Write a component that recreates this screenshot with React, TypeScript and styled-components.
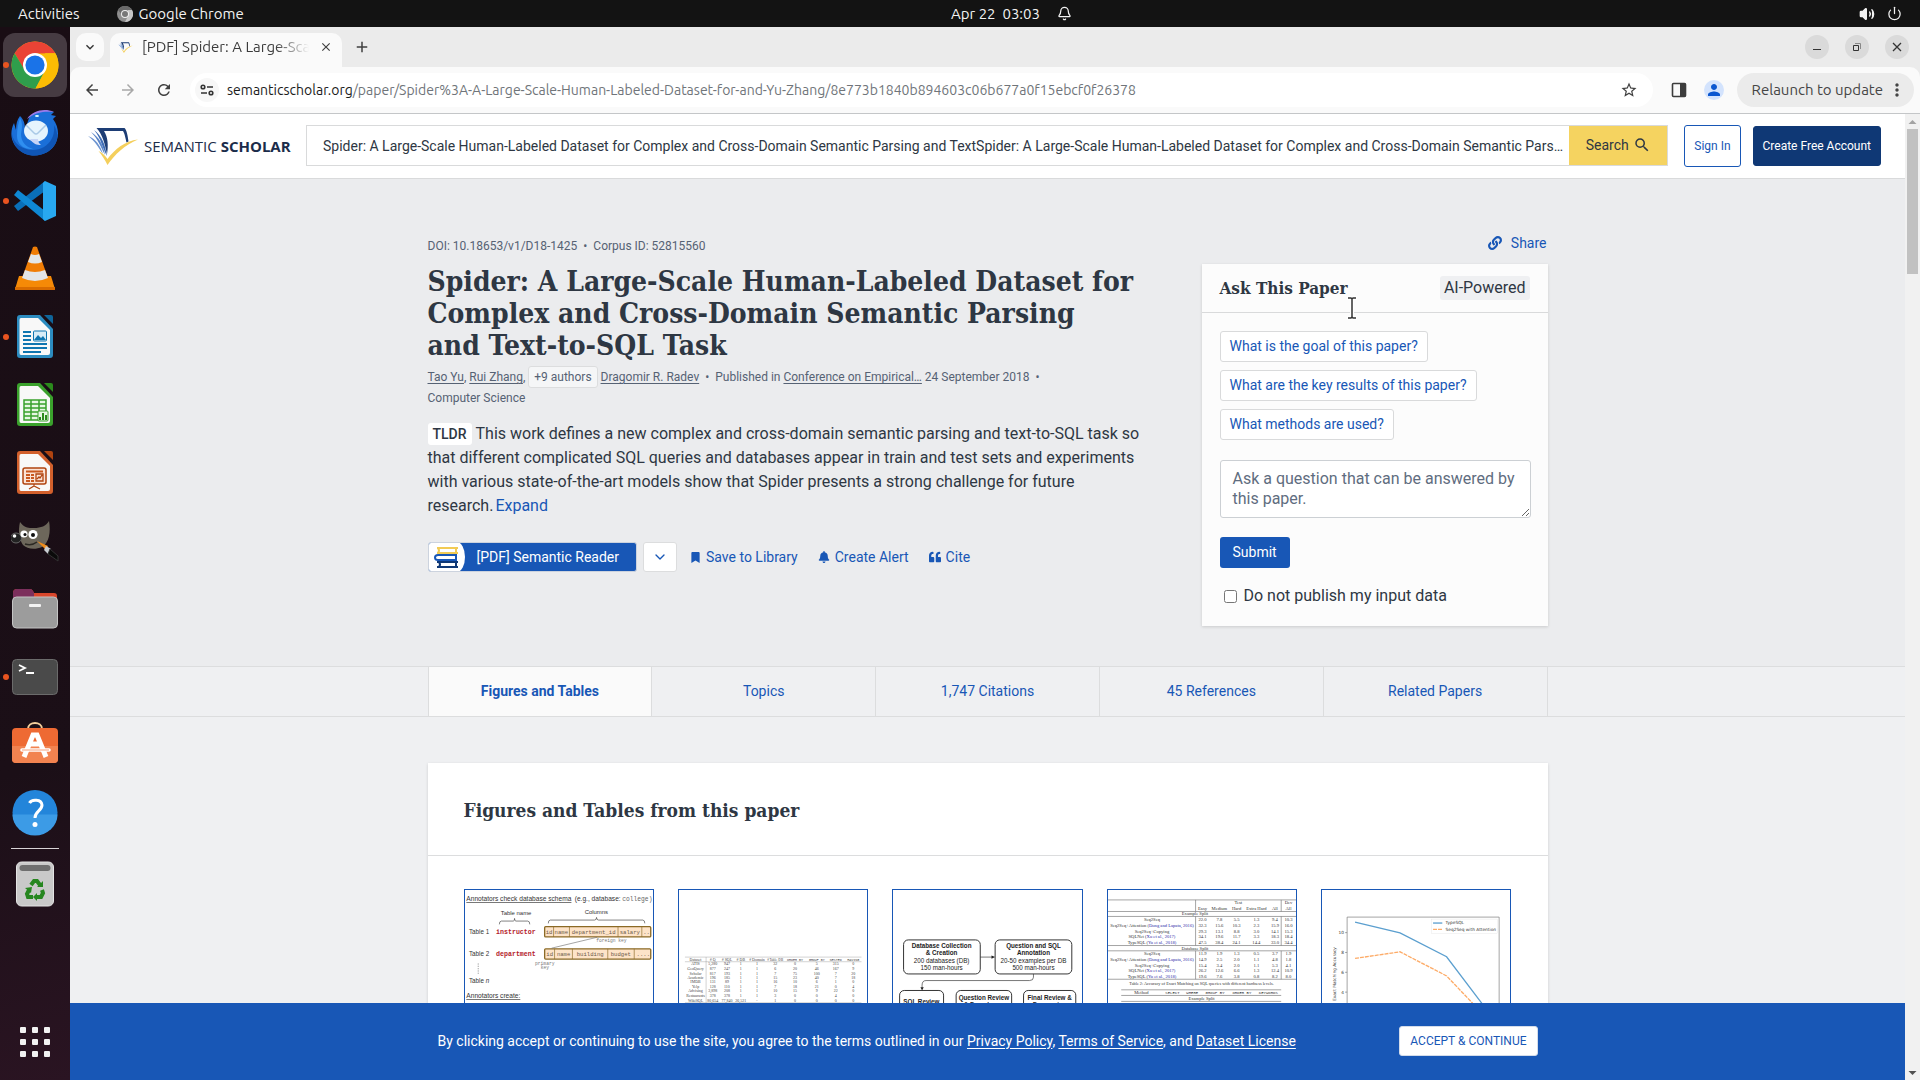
import React from "react";
import styled, { createGlobalStyle, css } from "styled-components";
import {
  MdAdd,
  MdArrowBack,
  MdArrowForward,
  MdClose,
  MdKeyboardArrowDown,
  MdMoreVert,
  MdPerson,
  MdRefresh,
  MdSearch,
  MdStarOutline,
} from "react-icons/md";
import { FaBell, FaBookmark, FaLink, FaQuoteLeft } from "react-icons/fa";
import { Bell, ChevronDown, Power, Volume2 } from "lucide-react";

const sans = `Roboto, "Liberation Sans", sans-serif`;
const slab = `"Roboto Slab", "DejaVu Serif Condensed", "DejaVu Serif", serif`;
const system = `Ubuntu, "Open Sans", "Noto Sans", sans-serif`;
const blue = "#1857b6";
const ink = "#2e3743";
const rule = "#d9dadb";

const Global = createGlobalStyle`
  *, *::before, *::after { box-sizing: border-box; }
  body { margin: 0; font-family: ${sans}; color: ${ink}; }
  button, input, textarea { font: inherit; color: inherit; margin: 0; }
  button { cursor: pointer; }
  h1, h2, p, ul { margin: 0; padding: 0; }
  svg { display: block; flex: none; }
`;

/* ---------- Desktop ---------- */

const Desktop = styled.div`
  display: flex;
  flex-direction: column;
  height: 100vh;
  overflow: hidden;
`;

const TopBar = styled.header`
  display: grid;
  grid-template-columns: 50% auto 1fr;
  align-items: center;
  height: 27px;
  flex: none;
  padding: 0 18px 0 0;
  background: #131313;
  color: #f2f2f2;
  font: 15px/20px ${system};
`;

const TopGroup = styled.div<{ $end?: boolean; $gap: number }>`
  display: flex;
  align-items: center;
  gap: ${(p) => p.$gap}px;
  justify-content: ${(p) => (p.$end ? "flex-end" : "flex-start")};
  white-space: pre;
`;

const Activities = styled.span`
  padding-left: 18px;
`;

const AppName = styled.span`
  display: flex;
  align-items: center;
  gap: 6px;
`;

const Work = styled.div`
  display: flex;
  flex: 1;
  min-height: 0;
`;

const Dock = styled.nav`
  display: flex;
  flex-direction: column;
  align-items: center;
  gap: 4px;
  width: 70px;
  flex: none;
  padding: 6px 0 6px;
  background: linear-gradient(165deg, #190d14 0%, #1b0f17 70%, #2a1422 100%);
`;

const DockButton = styled.button<{ $active?: boolean; $running?: boolean }>`
  position: relative;
  display: grid;
  place-items: center;
  width: 64px;
  height: 64px;
  flex: none;
  padding: 0;
  border: 0;
  border-radius: 12px;
  background: ${(p) => (p.$active ? "#463b42" : "transparent")};
  ${(p) =>
    p.$running &&
    css`
      &::before {
        content: "";
        position: absolute;
        left: 0;
        top: 29px;
        width: 6px;
        height: 6px;
        border-radius: 50%;
        background: #e95420;
      }
    `}
`;

const DockRule = styled.hr`
  width: 48px;
  height: 1px;
  flex: none;
  margin: -1px 0 -1px;
  border: 0;
  background: #d8d4d6;
`;

const DockSpring = styled.div`
  flex: 1;
`;

/* ---------- Browser ---------- */

const Browser = styled.div`
  display: flex;
  flex-direction: column;
  flex: 1;
  min-width: 0;
  background: #ebebeb;
  font: 14px/20px ${system};
`;

const TabStrip = styled.div`
  display: flex;
  height: 40px;
  flex: none;
  padding: 6px 11px 0 6px;
`;

const TabSearch = styled.button`
  display: grid;
  place-items: center;
  width: 28px;
  height: 28px;
  margin-right: 6px;
  padding: 0;
  border: 0;
  border-radius: 10px;
  background: #fafafa;
  color: #333;
`;

const Tab = styled.div`
  display: flex;
  align-items: center;
  width: 232px;
  padding: 0 9px 6px 8px;
  border-radius: 10px 10px 0 0;
  background: #fafafa;
  color: #3c3c3c;
  font-size: 15px;
`;

const TabTitle = styled.span`
  flex: 1;
  min-width: 0;
  margin: 0 10px 0 9px;
  overflow: hidden;
  white-space: nowrap;
  mask-image: linear-gradient(90deg, #000 80%, transparent 100%);
`;

const Bare = styled.button`
  display: grid;
  place-items: center;
  padding: 0;
  border: 0;
  background: none;
  color: #404040;
`;

const NewTab = styled(Bare)`
  width: 20px;
  height: 28px;
  margin-left: 10px;
`;

const WindowButtons = styled.div`
  display: flex;
  gap: 16px;
  margin: 2px 0 0 auto;
`;

const WindowButton = styled(Bare)`
  width: 24px;
  height: 24px;
  border-radius: 50%;
  background: #dadada;
`;

const Toolbar = styled.div`
  display: flex;
  align-items: center;
  height: 47px;
  flex: none;
  padding: 0 6px 0 13px;
  border-bottom: 1px solid #c4c6c8;
  border-radius: 10px 10px 0 0;
  background: #fafafa;
`;

const NavButtons = styled.div`
  display: flex;
  gap: 18px;
  margin-right: 17px;
  button:nth-child(2) {
    color: #a8a8a8;
  }
`;

const UrlBar = styled.div`
  display: flex;
  align-items: center;
  flex: 1;
  min-width: 0;
  height: 34px;
  padding: 0 15px 0 5px;
  border-radius: 17px;
  background: #fff;
`;

const SiteInfo = styled(Bare)`
  width: 24px;
  height: 24px;
  margin-right: 8px;
  border-radius: 50%;
  background: #f7f7f7;
`;

const Url = styled.span`
  flex: 1;
  min-width: 0;
  overflow: hidden;
  color: #70757a;
  white-space: nowrap;
  b {
    color: #1b1b1b;
    font-weight: 400;
  }
`;

const ToolIcons = styled.div`
  display: flex;
  align-items: center;
  gap: 17px;
  margin: 0 13px 0 18px;
`;

const Avatar = styled(Bare)`
  width: 20px;
  height: 20px;
  border-radius: 50%;
  background: #d3e3fd;
  color: #0b57d0;
`;

const Relaunch = styled.button`
  display: flex;
  align-items: center;
  gap: 4px;
  height: 34px;
  padding: 0 7px 0 15px;
  border: 0;
  border-radius: 17px;
  background: #ebebeb;
  color: #454545;
  font: 15px/20px ${system};
`;

const View = styled.div`
  display: flex;
  flex: 1;
  min-height: 0;
`;

const Page = styled.div`
  display: flex;
  flex-direction: column;
  flex: 1;
  min-width: 0;
  background: #eff0f2;
  font: 14px/20px ${sans};
`;

const Scrollbar = styled.div`
  display: flex;
  flex-direction: column;
  align-items: center;
  width: 15px;
  flex: none;
  background: #f1f1f1;
`;

const Thumb = styled.div`
  width: 11px;
  height: 145px;
  margin-bottom: auto;
  background: #c1c1c1;
`;

/* ---------- Site ---------- */

const SiteHeader = styled.header`
  display: flex;
  align-items: center;
  height: 65px;
  flex: none;
  padding: 0 24px 1px 18px;
  border-bottom: 1px solid ${rule};
  background: #fff;
`;

const Brand = styled.a`
  display: flex;
  align-items: center;
  gap: 6px;
  width: 218px;
  flex: none;
  color: #1b2c4a;
  font: 15px/20px "Open Sans", "Noto Sans", sans-serif;
  text-decoration: none;
  white-space: nowrap;
`;

const SearchForm = styled.form`
  display: flex;
  flex: 1;
  min-width: 0;
  height: 41px;
  margin-right: 16px;
  border: 1px solid ${rule};
`;

const SearchInput = styled.input`
  flex: 1;
  min-width: 0;
  padding: 0 5px 0 16px;
  border: 0;
  background: #fff;
  color: ${ink};
  text-overflow: ellipsis;
`;

const SearchButton = styled.button`
  display: flex;
  align-items: center;
  justify-content: center;
  gap: 4px;
  width: 98px;
  padding: 0 0 1px;
  border: 0;
  background: #f5d360;
  color: ${ink};
`;

const HeaderButton = styled.button<{ $solid?: boolean }>`
  height: ${(p) => (p.$solid ? 40 : 42)}px;
  padding: 0 9px;
  border: 1px solid ${(p) => (p.$solid ? "#0f3875" : blue)};
  border-radius: 3px;
  background: ${(p) => (p.$solid ? "#0f3875" : "#fff")};
  color: ${(p) => (p.$solid ? "#fff" : blue)};
  font-size: 12px;
  white-space: nowrap;
  & + & {
    margin-left: 12px;
  }
`;

const Scroll = styled.main`
  flex: 1;
  min-height: 0;
  overflow: hidden;
`;

const Container = styled.div`
  width: 100%;
  max-width: 1120px;
  margin: 0 auto;
`;

const Hero = styled.section`
  padding: 57px 0 40px;
  background: #ebecee;
`;

const HeroGrid = styled(Container)`
  display: grid;
  grid-template-columns: minmax(0, 1fr) 346px;
  gap: 59px;
`;

const Doi = styled.p`
  color: #566274;
  font-size: 12px;
`;

const Title = styled.h1`
  margin-top: 10px;
  color: ${ink};
  font: 700 28px/32px ${slab};
`;

const Meta = styled.div`
  margin-top: 4px;
  color: #566274;
  font-size: 12px;
  a {
    color: inherit;
    text-underline-offset: 2px;
  }
`;

const MoreAuthors = styled.button`
  padding: 3px 5px;
  border: 1px solid #dcddde;
  border-radius: 3px;
  background: #f5f6f7;
  line-height: 14px;
`;

const Dot = styled.span`
  margin: 0 6px;
`;

const MetaLine = styled.span`
  display: block;
`;

const Tldr = styled.p`
  margin-top: 14px;
  color: ${ink};
  font-size: 16px;
  line-height: 24px;
`;

const TldrTag = styled.span`
  display: inline-block;
  margin-right: 4px;
  padding: 1px 5px;
  border-radius: 3px;
  background: #fff;
  font-size: 14px;
  font-weight: 500;
  line-height: 20px;
`;

const LinkButton = styled.button<{ $gap?: number }>`
  display: inline-flex;
  align-items: center;
  gap: ${(p) => p.$gap ?? 5}px;
  padding: 0;
  border: 0;
  background: none;
  color: ${blue};
  white-space: nowrap;
`;

const Expand = styled.button`
  margin-left: 2px;
  padding: 0;
  border: 0;
  background: none;
  color: ${blue};
`;

const Actions = styled.div`
  display: flex;
  align-items: center;
  gap: 20px;
  margin-top: 24px;
`;

const ReaderGroup = styled.div`
  display: flex;
  gap: 6px;
  margin-right: -7px;
`;

const Reader = styled.button`
  display: flex;
  align-items: center;
  height: 30px;
  padding: 0 17px 0 0;
  overflow: hidden;
  border: 1px solid #ccd3de;
  border-radius: 3px;
  background: ${blue};
  color: #fff;
`;

const ReaderIcon = styled.span`
  display: grid;
  place-items: center;
  width: 36px;
  height: 30px;
  margin-right: 12px;
  border-radius: 0 8px 8px 0 / 0 15px 15px 0;
  background: #fff;
`;

const ReaderMore = styled.button`
  display: grid;
  place-items: center;
  width: 34px;
  height: 30px;
  padding: 0;
  border: 1px solid #dcddde;
  border-radius: 3px;
  background: #fff;
  color: ${blue};
`;

const Aside = styled.aside`
  display: flex;
  flex-direction: column;
`;

const ShareRow = styled.div`
  display: flex;
  justify-content: flex-end;
  margin: -3px 1px 11px;
`;

const AskCard = styled.section`
  background: #fcfcfc;
  box-shadow: 0 1px 3px rgba(0, 0, 0, 0.14);
`;

const AskHead = styled.div`
  display: flex;
  align-items: center;
  justify-content: space-between;
  height: 49px;
  padding: 0 18px;
  border-bottom: 1px solid ${rule};
`;

const AskTitle = styled.h2`
  color: ${ink};
  font: 700 17px/24px ${slab};
`;

const Badge = styled.span`
  padding: 0 4px;
  border-radius: 3px;
  background: #eff0f2;
  font-size: 16px;
  line-height: 24px;
`;

const AskBody = styled.form`
  display: flex;
  flex-direction: column;
  align-items: flex-start;
  gap: 8px;
  padding: 18px 17px 20px 18px;
`;

const Suggestion = styled.button`
  height: 31px;
  padding: 0 9px 2px;
  border: 1px solid ${rule};
  border-radius: 3px;
  background: #fff;
  color: ${blue};
`;

const Question = styled.textarea`
  width: 100%;
  height: 58px;
  margin: 12px 0 11px;
  padding: 8px 12px;
  border: 1px solid #ccd0d4;
  border-radius: 3px;
  background: #fff;
  font-size: 16px;
  line-height: 20px;
  resize: vertical;
  &::placeholder {
    color: #5f6d80;
  }
`;

const Submit = styled.button`
  height: 31px;
  padding: 0 13px 2px;
  border: 0;
  border-radius: 3px;
  background: ${blue};
  color: #fff;
`;

const Publish = styled.label`
  display: flex;
  align-items: center;
  gap: 7px;
  margin: 10px 0 0 4px;
  font-size: 16px;
  input {
    width: 13px;
    height: 13px;
  }
`;

const TabsBar = styled.nav`
  border: solid #dcddde;
  border-width: 1px 0;
`;

const TabsRow = styled(Container)`
  display: grid;
  grid-template-columns: repeat(5, 1fr);
  border-left: 1px solid #dcddde;
`;

const PageTab = styled.a<{ $active?: boolean }>`
  height: 49px;
  border-right: 1px solid #dcddde;
  background: ${(p) => (p.$active ? "#fafafa" : "transparent")};
  color: ${blue};
  font-weight: ${(p) => (p.$active ? 700 : 400)};
  line-height: 48px;
  text-align: center;
  text-decoration: none;
`;

const Card = styled.section`
  margin-top: 46px;
  background: #fff;
  box-shadow: 0 1px 3px rgba(0, 0, 0, 0.14);
`;

const CardHead = styled.div`
  padding: 35px 36px 33px;
  border-bottom: 1px solid #dcddde;
`;

const CardTitle = styled.h2`
  color: ${ink};
  font: 700 19px/24px ${slab};
`;

const Figures = styled.div`
  display: grid;
  grid-template-columns: repeat(5, minmax(0, 1fr));
  gap: 24px;
  padding: 33px 36px;
`;

const Figure = styled.a`
  display: block;
  border: 1px solid ${blue};
  background: #fff;
  svg {
    width: 100%;
    height: auto;
  }
`;

const Consent = styled.footer`
  flex: none;
  padding: 23px 0 24px;
  background: ${blue};
  color: #fff;
`;

const ConsentRow = styled(Container)`
  display: flex;
  align-items: center;
  justify-content: space-between;
  padding: 0 10px;
  a {
    color: inherit;
    text-underline-offset: 2px;
  }
`;

const Accept = styled.button`
  height: 30px;
  padding: 0 10px 1px;
  border: 1px solid #d3dcea;
  border-radius: 3px;
  background: #fff;
  color: ${blue};
  font-size: 12px;
`;

const Pointer = styled.svg`
  position: absolute;
  left: 1345px;
  top: 296px;
`;

/* ---------- Drawings ---------- */

const Icon48 = ({ children }: { children: React.ReactNode }) => (
  <svg width="48" height="48" viewBox="0 0 48 48" aria-hidden="true">
    {children}
  </svg>
);

const ChromeIcon = () => (
  <Icon48>
    <circle cx="24" cy="24" r="23.500" fill="#fbbc04" />
    <path d="M3.600 12.300A23.500 23.500 0 0 1 44.400 12.300L24 12.500 14 30Z" fill="#ea4335" />
    <path d="M3.600 12.300A23.500 23.500 0 0 0 24.500 47.500L34 29.500 14 29.500Z" fill="#2f9e4c" />
    <path d="M44.400 12.300A23.500 23.500 0 0 1 24.500 47.500L34.500 29.500 34 12.300Z" fill="#fbbc04" />
    <circle cx="24" cy="24" r="12" fill="#fff" />
    <circle cx="24" cy="24" r="9.600" fill="#1a73e8" />
  </Icon48>
);

const ThunderbirdIcon = () => (
  <Icon48>
    <path d="M9 7c5 5 5 10 5 14l4-12C22 2 34 0 43 3l-3 3 5 1-3 3c7 9 6 20 1 27-8 11-26 13-36 3C-1 32-1 22 3 14l2 7C5 15 6 11 9 7Z" fill="#1a6fd8" />
    <path d="M16 10C22 1 34-1 43 3c-9-1-18 0-24 5Z" fill="#9a7bea" />
    <path d="M1 25c2 14 20 20 32 13 8-5 11-13 10-22 5 9 4 17-1 22-8 10-25 12-35 2-4-4-6-9-6-15Z" fill="#0f55b5" />
    <path d="M9 9c3 5 2 11 1 16 0 8 5 13 12 15-9 1-16-5-16-13 0-6 1-12 3-18Z" fill="#2f8ff0" />
    <ellipse cx="25" cy="22" rx="12" ry="10.500" fill="#e6f4fd" />
    <path d="M15 16l8 8q2 2 4 0l8-8" fill="none" stroke="#a9c9e6" strokeWidth="1.500" />
    <path d="M19 30c3 5 7 6 11 6-2-2-3-3-3-6Z" fill="#c6d4f7" />
    <ellipse cx="26" cy="7" rx="2" ry="1" fill="#dff" />
  </Icon48>
);

const CodeIcon = () => (
  <Icon48>
    <path d="M3 29L7 34 34 14V4Z" fill="#0a6fb8" />
    <path d="M3 18L7 13 34 34V44Z" fill="#0f88d4" />
    <path d="M34 4l11 5v30l-11 5-2-2V6Z" fill="#28a8f0" />
  </Icon48>
);

const VlcIcon = () => (
  <Icon48>
    <path d="M8 31h32l4 13q0 1-1 1H5q-1 0-1-1Z" fill="#f58a07" />
    <path d="M4 42h40v2q0 1-1 1H5q-1 0-1-1Z" fill="#d96c00" />
    <path d="M22 2q2-1 4 0l11 31q-13 6-26 0Z" fill="#f07d05" />
    <path d="M20 9q4 2 8 0l3 8q-7 3-14 0Z" fill="#e3e6e8" />
    <path d="M14 25q10 4 20 0l3 8q-13 6-26 0Z" fill="#e3e6e8" />
  </Icon48>
);

const Doc = ({ color, dark, children }: { color: string; dark: string; children: React.ReactNode }) => (
  <Icon48>
    <path d="M9 2h20l13 14v26q0 3-3 3H9q-3 0-3-3V5q0-3 3-3Z" fill={color} />
    <path d="M10 5h17l12 12v23q0 2-2 2H10q-1.500 0-1.500-2V7q0-2 1.500-2Z" fill="#f8f8f8" />
    <path d="M33 2h7q2 0 2 2v7Z" fill={dark} />
    <g transform="translate(-1 -1)">{children}</g>
  </Icon48>
);

const WriterIcon = () => (
  <Doc color="#2c8cc0" dark="#0f659a">
    <path d="M13 20h8M13 24h8M13 28h8M13 32h24M13 36h24M13 40h18" stroke="#0f75b0" strokeWidth="2" />
    <rect x="23.500" y="19" width="13" height="10" rx="1" fill="#d8ecf7" stroke="#0f75b0" />
    <path d="M24 28l4-5 3 3 2-2 3 4Z" fill="#0f75b0" />
  </Doc>
);

const CalcIcon = () => (
  <Doc color="#3aa12c" dark="#2b8a1c">
    <path d="M14 20h22v20H14ZM14 24h22M14 28h22M14 32h22M14 36h22M21 20v20M29 20v20" fill="#e7f7e2" stroke="#3aa12c" strokeWidth="1.500" />
    <rect x="28" y="31" width="10" height="10" rx="1" fill="#e7f7e2" stroke="#3aa12c" />
    <path d="M30 40v-3M33 40v-7M36 40v-5" stroke="#2b8a1c" strokeWidth="2" />
  </Doc>
);

const ImpressIcon = () => (
  <Doc color="#d2602c" dark="#b04410">
    <rect x="13" y="20" width="23" height="16" rx="2" fill="#fbe3d6" stroke="#b04410" strokeWidth="1.500" />
    <path d="M16 23.500h17M16 27h4M16 30h4M16 33h4M21 27h3M21 30h3M21 33h3" stroke="#c9581f" strokeWidth="1.800" />
    <path d="M26 26h7v7h-7ZM27 31l2-2 1 1 2-3M24 36v2M19 41l5-3 6 3" fill="none" stroke="#b04410" strokeWidth="1.300" />
  </Doc>
);

const GimpIcon = () => (
  <Icon48>
    <path d="M9 5c5 7 10 6 14 6 7 0 12-2 15-7 2 11 0 22-7 26-7 3-15 2-19-2-4-6-5-14-3-23Z" fill="#6d675b" />
    <ellipse cx="5" cy="21" rx="5.500" ry="5" fill="#222" stroke="#666" />
    <circle cx="3.500" cy="19" r="1.800" fill="#fff" />
    <circle cx="13" cy="17" r="3.600" fill="#fff" />
    <circle cx="22" cy="17.500" r="4.600" fill="#fff" />
    <circle cx="14" cy="17.500" r="1.500" fill="#111" />
    <circle cx="22" cy="18" r="2" fill="#111" />
    <path d="M14 27q7 2 12-2" fill="none" stroke="#2b2823" strokeWidth="1.500" />
    <path d="M26 24l11 5-2 4Z" fill="#f08c1a" />
    <path d="M35 29l5 3-3 5-4-4Z" fill="#c9cdd2" />
    <path d="M39 32l8 7v5l-10-7Z" fill="#0a0a0a" stroke="#333" />
  </Icon48>
);

const FilesIcon = () => (
  <Icon48>
    <path d="M2 8q0-4 4-4h13q2 0 3 2l1 2h20q3 0 3 3v8H2Z" fill="#d9472c" />
    <path d="M2 8q0-4 4-4h13q2 0 3 2l1 2v8H2Z" fill="#7c2f5c" />
    <rect x="1.500" y="12" width="45" height="31" rx="4" fill="#9c9c9c" stroke="#c4c4c4" />
    <rect x="18" y="19" width="12" height="3" rx="1" fill="#f2f2f2" />
  </Icon48>
);

const TerminalIcon = () => (
  <Icon48>
    <rect x="1.500" y="6.500" width="45" height="35" rx="4" fill="#4a4a4a" stroke="#6b6b6b" />
    <path d="M8 12l6 3-6 3M15 20h8" fill="none" stroke="#fff" strokeWidth="1.800" />
  </Icon48>
);

const StoreIcon = () => (
  <Icon48>
    <path d="M17 8c0-8 14-8 14 0" fill="none" stroke="#f4cf9c" strokeWidth="2" />
    <rect x="1" y="7" width="46" height="35" rx="4" fill="#ee6a33" />
    <path d="M1 25h46v13q0 4-4 4H5q-4 0-4-4Z" fill="#f28350" />
    <path d="M13 36L22 14h4l9 22M20 23h8" fill="none" stroke="#fff" strokeWidth="5" />
    <path d="M11 29h27" stroke="#fff" strokeWidth="3.600" strokeLinecap="round" />
    <path d="M11 29h27" stroke="#f6a07c" strokeWidth="1" />
  </Icon48>
);

const HelpIcon = () => (
  <Icon48>
    <circle cx="24" cy="23.500" r="22.500" fill="#2385da" />
    <path d="M1.500 25.500h45a22.500 21 0 0 1-45 0Z" fill="#3c9be6" />
    <path d="M18.500 14c2-4 12-4 12.500 2 0 6-7 6-7 13" fill="none" stroke="#fff" strokeWidth="3" />
    <circle cx="24" cy="35.500" r="2.500" fill="#fff" />
  </Icon48>
);

const TrashIcon = () => (
  <Icon48>
    <rect x="5.500" y="2" width="37" height="44" rx="5" fill="#c9c9c9" stroke="#e4e4e4" />
    <rect x="8.500" y="5" width="31" height="6" rx="3" fill="#6f6f6f" />
    <g fill="none" stroke="#26861f" strokeWidth="4">
      <path d="M20 25l3-4h3l3 4" />
      <path d="M31 30l1 3-2 4h-4" />
      <path d="M22 37h-5l-1-3 2-4" />
    </g>
    <path d="M32 21v6h-6ZM26 33v8l-4-4ZM14 28l7-1-1 6Z" fill="#26861f" />
  </Icon48>
);

const AppsIcon = () => (
  <svg width="32" height="32" viewBox="0 0 32 32" aria-hidden="true">
    {[1, 13, 25].map((y) =>
      [1, 13, 25].map((x) => <rect key={`${x}-${y}`} x={x} y={y} width="6" height="6" rx="1" fill="#f2f2f2" />),
    )}
  </svg>
);

const ScholarLogo = ({ size }: { size: number }) => (
  <svg width={size} height={Math.round(size * 0.76)} viewBox="0 0 50 38" aria-hidden="true">
    <path d="M0 9c8 3 12 9 15 18C10 20 7 14 0 9Z" fill="#6b93d0" />
    <path d="M3 5c8 5 12 12 14 23C12 19 10 12 3 5Z" fill="#5b86c9" />
    <path d="M6 3c8 6 11 14 13 26C14 20 13 11 6 3Z" fill="#3f6db5" />
    <path d="M8.500 1h28c2 1 3.500 9 4 13.500l-2 1C37.500 11 36.500 6 35 4H16c4 6 4.500 15 3 23-2-9-4-19-10.500-26Z" fill="#1d3d75" />
    <path d="M10.500 24c4 2 6 4 9 8C27 22 37 14 50 12.500 37 18 27 27 19.500 38 17 33 14 28 10.500 24Z" fill="#f4cf5c" />
  </svg>
);

const BooksIcon = () => (
  <svg width="26" height="23" viewBox="0 0 26 23" fill="none" strokeWidth="2" aria-hidden="true">
    <path d="M3 2h21M3 7h21M4 2q2 2.500 0 5M22 2v5" stroke="#f2cb54" />
    <path d="M23 9H4q-3 0-3 2.500T4 14h19M22 9v5" stroke={blue} />
    <path d="M3 16h21M3 21h21M5 16q2 2.500 0 5M22 16v5" stroke="#0f3875" />
  </svg>
);

type TextProps = React.SVGProps<SVGTextElement>;
const mono = `"Liberation Mono", monospace`;
const helv = `"Liberation Sans", sans-serif`;
const times = `"Liberation Serif", serif`;

const Cell = (p: TextProps) => <text textAnchor="middle" {...p} />;

const SchemaFigure = () => (
  <svg viewBox="0 0 570 570" fontFamily={helv} fontSize="19" fill="#333">
    <text x="4" y="34" fontSize="20" textDecoration="underline">Annotators check database schema</text>
    <text x="332" y="34" fontSize="20">(e.g., database:</text>
    <text x="476" y="34" fontSize="19" fontFamily={mono} fill="#666">college)</text>
    <text x="108" y="77" fontSize="18">Table name</text>
    <text x="362" y="73" fontSize="18">Columns</text>
    <path d="M104 104q0-10 6-10h36q4 0 4-8 0 8 4 8h36q6 0 6 10M252 101q0-10 6-10h134q6 0 6-8 0 8 6 8h134q6 0 6 10" fill="none" stroke="#444" strokeWidth="2" />
    <text x="12" y="133">Table 1</text>
    <text x="12" y="199">Table 2</text>
    <text x="12" y="281">Table <tspan fontStyle="italic">n</tspan></text>
    <g fontFamily={mono} fontWeight="700" fontSize="20" fill="#b3202a">
      <text x="94" y="133">instructor</text>
      <text x="94" y="199">department</text>
    </g>
    <g fill="#fde3c8" stroke="#8b6a26" strokeWidth="4">
      <rect x="241" y="111" width="321" height="31" rx="3" />
      <rect x="241" y="178" width="321" height="31" rx="3" />
    </g>
    <path d="M268 111v31M316 111v31M463 111v31M535 111v31M271 178v31M325 178v31M432 178v31M512 178v31" stroke="#8b6a26" strokeWidth="2" />
    <g fontFamily={mono} fontSize="17" fill="#6b5a4a">
      <text x="244" y="132">id</text>
      <text x="271" y="132">name</text>
      <text x="323" y="132">department_id</text>
      <text x="468" y="132">salary</text>
      <text x="539" y="132">..</text>
      <text x="246" y="199">id</text>
      <text x="278" y="199">name</text>
      <text x="338" y="199">building</text>
      <text x="441" y="199">budget</text>
      <text x="519" y="199">....</text>
    </g>
    <path d="M400 143L262 176" stroke="#777" strokeWidth="2" />
    <path d="M40 222v34" stroke="#777" strokeWidth="2" strokeDasharray="4 3" />
    <g fontFamily={mono} fontSize="14" fill="#777">
      <text x="397" y="158">foreign key</text>
      <text x="212" y="226">primary</text>
      <text x="229" y="240">key</text>
    </g>
    <text x="4" y="327" fontSize="20" textDecoration="underline">Annotators create:</text>
  </svg>
);

const datasetCols = [50, 102, 145, 187, 236, 291, 351, 417, 474, 527];
const datasetRows = [
  ["Dataset", "# Q", "# SQL", "# DB", "# Domain", "# Table /DB", "ORDER BY", "GROUP BY", "NESTED", "HAVING"],
  ["ATIS", "5,280", "947", "1", "1", "32", "0", "5", "315", "0"],
  ["GeoQuery", "877", "247", "1", "1", "6", "20", "46", "167", "9"],
  ["Scholar", "817", "193", "1", "1", "7", "75", "100", "7", "20"],
  ["Academic", "196", "185", "1", "1", "15", "23", "40", "7", "18"],
  ["IMDB", "131", "89", "1", "1", "16", "10", "6", "1", "0"],
  ["Yelp", "128", "110", "1", "1", "7", "18", "21", "0", "4"],
  ["Advising", "3,898", "208", "1", "1", "10", "15", "9", "22", "0"],
  ["Restaurants", "378", "378", "1", "1", "3", "0", "0", "4", "0"],
  ["WikiSQL", "80,654", "77,840", "26,521", "-", "1", "0", "0", "0", "0"],
];

const DatasetFigure = () => (
  <svg viewBox="0 0 570 570" fontFamily={times} fontSize="12" fill="#444">
    <path d="M18 203h534M18 217h534M82 203v138M18 341h534" stroke="#777" />
    {datasetRows.map((row, r) =>
      row.map((value, c) => (
        <Cell
          key={`${r}-${c}`}
          x={datasetCols[c]}
          y={214 + r * 14 - (r > 3 ? 2 : 0)}
          fontSize={r === 0 && c > 4 ? 10 : 12}
          fontFamily={r === 0 && c > 5 ? mono : times}
        >
          {value}
        </Cell>
      )),
    )}
  </svg>
);

const ProcessFigure = () => (
  <svg viewBox="0 0 570 570" fontFamily={helv} fontSize="19" fill="#222">
    <g fill="#fff" stroke="#333" strokeWidth="3">
      <rect x="32" y="151" width="232" height="103" rx="14" />
      <rect x="309" y="151" width="232" height="103" rx="14" />
      <rect x="20" y="304" width="133" height="103" rx="14" />
      <rect x="191" y="304" width="168" height="103" rx="14" />
      <rect x="395" y="304" width="158" height="103" rx="14" />
    </g>
    <path d="M264 203h36M425 254v10q0 10-12 10H100q-12 0-12 14v8" fill="none" stroke="#333" strokeWidth="2" />
    <path d="M298 198l11 5-11 5ZM83 294l5 10 5-10Z" />
    <g fontWeight="700">
      <Cell x="147" y="174">Database Collection</Cell>
      <Cell x="147" y="198">&amp; Creation</Cell>
      <Cell x="425" y="174">Question and SQL</Cell>
      <Cell x="425" y="198">Annotation</Cell>
      <Cell x="86" y="345">SQL Review</Cell>
      <Cell x="275" y="332">Question Review</Cell>
      <Cell x="275" y="355">&amp; Paraphrase</Cell>
      <Cell x="474" y="332">Final Review &amp;</Cell>
      <Cell x="474" y="355">Processing</Cell>
    </g>
    <Cell x="147" y="221">200 databases (DB)</Cell>
    <Cell x="147" y="243">150 man-hours</Cell>
    <Cell x="425" y="221">20-50 examples per DB</Cell>
    <Cell x="425" y="243">500 man-hours</Cell>
  </svg>
);

const resultCols = [286, 337, 389, 449, 505, 546];
const models: [string, string][] = [
  ["Seq2Seq", ""],
  ["Seq2Seq+Attention (", "Dong and Lapata, 2016)"],
  ["Seq2Seq+Copying", ""],
  ["SQLNet (", "Xu et al., 2017)"],
  ["TypeSQL (", "Yu et al., 2018)"],
];
const exampleSplit = [
  ["22.0", "7.8", "5.5", "1.3", "9.4", "10.3"],
  ["32.3", "15.6", "10.3", "2.3", "15.9", "16.0"],
  ["29.3", "13.1", "8.8", "3.0", "14.1", "15.3"],
  ["34.1", "19.6", "11.7", "3.3", "18.3", "18.4"],
  ["47.5", "38.4", "24.1", "14.4", "33.0", "34.4"],
];
const databaseSplit = [
  ["11.9", "1.9", "1.3", "0.5", "3.7", "1.9"],
  ["14.9", "2.5", "2.0", "1.1", "4.8", "1.8"],
  ["15.4", "3.4", "2.0", "1.1", "5.3", "4.1"],
  ["26.2", "12.6", "6.6", "1.3", "12.4", "10.9"],
  ["19.6", "7.6", "3.8", "0.8", "8.2", "8.0"],
];

const Split = ({ top, data }: { top: number; data: string[][] }) => (
  <>
    {data.map((row, r) => (
      <g key={r}>
        <Cell x={133} y={top + r * 17}>
          {models[r][0]}
          <tspan fill="#2a2aa8">{models[r][1]}</tspan>
        </Cell>
        {row.map((value, c) => (
          <Cell key={c} x={resultCols[c]} y={top + r * 17}>
            {value}
          </Cell>
        ))}
      </g>
    ))}
  </>
);

const ResultsFigure = () => (
  <svg viewBox="0 0 570 570" fontFamily={times} fontSize="14" fill="#333">
    <path d="M0 30h570M0 65h570M0 80h570M0 168h570M0 184h570M0 270h570M265 30v35M265 80v88M265 184v86M524 30v35M524 80v88M524 184v86M40 302h484M40 319h484M40 337h484" stroke="#777" strokeWidth="2" />
    <Cell x="394" y="42">Test</Cell>
    <Cell x="546" y="42">Dev</Cell>
    {["Easy", "Medium", "Hard", "Extra Hard", "All", "All"].map((name, c) => (
      <Cell key={c} x={resultCols[c]} y={60}>{name}</Cell>
    ))}
    <Cell x="263" y="77">Example Split</Cell>
    <Split top={95} data={exampleSplit} />
    <Cell x="263" y="181">Database Split</Cell>
    <Split top={198} data={databaseSplit} />
    <Cell x="283" y="287" fontSize="13">Table 2: Accuracy of Exact Matching on SQL queries with different hardness levels.</Cell>
    <Cell x="101" y="315">Method</Cell>
    <g fontFamily={mono} fontSize="12">
      <Cell x="195" y="315">SELECT</Cell>
      <Cell x="255" y="315">WHERE</Cell>
      <Cell x="324" y="315">GROUP BY</Cell>
      <Cell x="405" y="315">ORDER BY</Cell>
      <Cell x="485" y="315">KEYWORDS</Cell>
    </g>
    <Cell x="283" y="332">Example Split</Cell>
  </svg>
);

const AccuracyFigure = () => (
  <svg viewBox="0 0 570 570" fontFamily={`"DejaVu Sans", sans-serif`} fontSize="13" fill="#333">
    <path d="M76 500V82h460v418M70 129h6M70 189h6M70 249h6M70 309h6" fill="none" stroke="#777" strokeWidth="2" />
    <path d="M100 97L236 130 377 202 483 342 520 400" fill="none" stroke="#5b9fcf" strokeWidth="4" />
    <path d="M100 207L236 187 377 260 455 342 500 400" fill="none" stroke="#fdab67" strokeWidth="4" strokeDasharray="12 3" />
    <rect x="331" y="88" width="200" height="43" fill="#fff" stroke="#ddd" />
    <path d="M336 100h28" stroke="#5b9fcf" strokeWidth="4" />
    <path d="M336 119h28" stroke="#fdab67" strokeWidth="4" strokeDasharray="12 3" />
    <text x="374" y="104">TypeSQL</text>
    <text x="374" y="123">Seq2Seq with Attention</text>
    <text x="50" y="134">10</text>
    <text x="58" y="194">8</text>
    <text x="58" y="254">6</text>
    <text x="58" y="314">4</text>
    <text transform="translate(43 336) rotate(-90)" fontSize="13">Exact Matching Accuracy</text>
  </svg>
);

const ArrowMark = ({ down }: { down?: boolean }) => (
  <svg width="15" height="15" viewBox="0 0 15 15" aria-hidden="true">
    {down ? <path d="M3.500 6h8l-4 4Z" fill="#505050" /> : <path d="M3.500 10h8l-4-4Z" fill="#a3a3a3" />}
  </svg>
);

/* ---------- Screen ---------- */

const dockApps = [
  { name: "Google Chrome", Icon: ChromeIcon, active: true, running: true },
  { name: "Thunderbird Mail", Icon: ThunderbirdIcon },
  { name: "Visual Studio Code", Icon: CodeIcon, running: true },
  { name: "VLC media player", Icon: VlcIcon },
  { name: "LibreOffice Writer", Icon: WriterIcon, running: true },
  { name: "LibreOffice Calc", Icon: CalcIcon },
  { name: "LibreOffice Impress", Icon: ImpressIcon },
  { name: "GIMP", Icon: GimpIcon },
  { name: "Files", Icon: FilesIcon },
  { name: "Terminal", Icon: TerminalIcon, running: true },
  { name: "Ubuntu Software", Icon: StoreIcon },
  { name: "Help", Icon: HelpIcon },
];

const query =
  "Spider: A Large-Scale Human-Labeled Dataset for Complex and Cross-Domain Semantic Parsing and Text";

const suggestions = [
  "What is the goal of this paper?",
  "What are the key results of this paper?",
  "What methods are used?",
];

const pageTabs = ["Figures and Tables", "Topics", "1,747 Citations", "45 References", "Related Papers"];

const figures = [
  { label: "Figure 1", Drawing: SchemaFigure },
  { label: "Table 1", Drawing: DatasetFigure },
  { label: "Figure 2", Drawing: ProcessFigure },
  { label: "Table 2", Drawing: ResultsFigure },
  { label: "Figure 3", Drawing: AccuracyFigure },
];

const stop = (e: React.FormEvent) => e.preventDefault();

export default function App() {
  return (
    <Desktop>
      <Global />
      <TopBar>
        <TopGroup $gap={37}>
          <Activities>Activities</Activities>
          <AppName>
            <svg width="16" height="16" viewBox="0 0 16 16" aria-hidden="true">
              <circle cx="8" cy="8" r="8" fill="#8e8e8e" />
              <path d="M1 4A8 8 0 0 1 15 4H8L5 9Z" fill="#6a6a6a" />
              <path d="M15 4A8 8 0 0 1 8 16L11 10V4Z" fill="#c6c6c6" />
              <circle cx="8" cy="8" r="4" fill="#eee" />
              <circle cx="8" cy="8" r="3" fill="#777" />
            </svg>
            Google Chrome
          </AppName>
        </TopGroup>
        <TopGroup $gap={17}>
          <span>Apr 22  03:03</span>
          <Bell size={15} strokeWidth={2} />
        </TopGroup>
        <TopGroup $gap={12} $end>
          <Volume2 size={16} fill="currentColor" />
          <Power size={15} />
        </TopGroup>
      </TopBar>
      <Work>
        <Dock aria-label="Dock">
          {dockApps.map(({ name, Icon, active, running }) => (
            <DockButton key={name} aria-label={name} $active={active} $running={running}>
              <Icon />
            </DockButton>
          ))}
          <DockRule />
          <DockButton aria-label="Trash">
            <TrashIcon />
          </DockButton>
          <DockSpring />
          <DockButton aria-label="Show Applications">
            <AppsIcon />
          </DockButton>
        </Dock>
        <Browser>
          <TabStrip>
            <TabSearch aria-label="Search tabs">
              <MdKeyboardArrowDown size={16} />
            </TabSearch>
            <Tab>
              <ScholarLogo size={15} />
              <TabTitle>[PDF] Spider: A Large-Scale</TabTitle>
              <Bare aria-label="Close tab">
                <MdClose size={14} />
              </Bare>
            </Tab>
            <NewTab aria-label="New tab">
              <MdAdd size={18} />
            </NewTab>
            <WindowButtons>
              <WindowButton aria-label="Minimize">
                <svg width="10" height="10" viewBox="0 0 10 10">
                  <path d="M1 7.500h8" stroke="#333" />
                </svg>
              </WindowButton>
              <WindowButton aria-label="Restore">
                <svg width="10" height="10" viewBox="0 0 10 10" fill="none">
                  <path d="M3 1.500h5.500V7" stroke="#888" />
                  <path d="M1.500 3.500h5v5h-5Z" stroke="#333" />
                </svg>
              </WindowButton>
              <WindowButton aria-label="Close">
                <svg width="10" height="10" viewBox="0 0 10 10">
                  <path d="M1 1l8 8M9 1l-8 8" stroke="#333" strokeWidth="1.300" />
                </svg>
              </WindowButton>
            </WindowButtons>
          </TabStrip>
          <Toolbar>
            <NavButtons>
              <Bare aria-label="Back">
                <MdArrowBack size={18} />
              </Bare>
              <Bare aria-label="Forward">
                <MdArrowForward size={18} />
              </Bare>
              <Bare aria-label="Reload">
                <MdRefresh size={18} />
              </Bare>
            </NavButtons>
            <UrlBar>
              <SiteInfo aria-label="Site information">
                <svg width="14" height="12" viewBox="0 0 14 12" fill="none" stroke="#333" strokeWidth="1.600">
                  <circle cx="3" cy="3" r="1.800" />
                  <circle cx="11" cy="9" r="1.800" />
                  <path d="M7 3h6M1 9h6" />
                </svg>
              </SiteInfo>
              <Url>
                <b>semanticscholar.org</b>
                /paper/Spider%3A-A-Large-Scale-Human-Labeled-Dataset-for-and-Yu-Zhang/8e773b1840b894603c06b677a0f15ebcf0f26378
              </Url>
              <Bare aria-label="Bookmark this tab">
                <MdStarOutline size={18} />
              </Bare>
            </UrlBar>
            <ToolIcons>
              <Bare aria-label="Side panel">
                <svg width="16" height="16" viewBox="0 0 16 16">
                  <rect x="1.500" y="1.500" width="13" height="13" rx="1" fill="none" stroke="#3c3c3c" strokeWidth="1.600" />
                  <rect x="9" y="1.500" width="5.500" height="13" fill="#3c3c3c" />
                </svg>
              </Bare>
              <Avatar aria-label="Profile">
                <MdPerson size={18} />
              </Avatar>
            </ToolIcons>
            <Relaunch>
              Relaunch to update
              <MdMoreVert size={20} />
            </Relaunch>
          </Toolbar>
          <View>
            <Page>
              <SiteHeader>
                <Brand href="#home">
                  <ScholarLogo size={50} />
                  <span>
                    SEMANTIC <b>SCHOLAR</b>
                  </span>
                </Brand>
                <SearchForm role="search" onSubmit={stop}>
                  <SearchInput aria-label="Search papers" defaultValue={query + query} />
                  <SearchButton>
                    Search
                    <MdSearch size={18} />
                  </SearchButton>
                </SearchForm>
                <HeaderButton>Sign In</HeaderButton>
                <HeaderButton $solid>Create Free Account</HeaderButton>
              </SiteHeader>
              <Scroll>
                <Hero>
                  <HeroGrid>
                    <div>
                      <Doi>
                        DOI: 10.18653/v1/D18-1425<Dot>•</Dot>Corpus ID: 52815560
                      </Doi>
                      <Title>
                        Spider: A Large-Scale Human-Labeled Dataset for Complex and Cross-Domain Semantic Parsing
                        {" and\u00a0Text-to-SQL Task"}
                      </Title>
                      <Meta>
                        <a href="#tao-yu">Tao Yu</a>, <a href="#rui-zhang">Rui Zhang</a>,{" "}
                        <MoreAuthors>+9 authors</MoreAuthors> <a href="#dragomir-radev">Dragomir R. Radev</a>
                        <Dot>•</Dot>Published in <a href="#venue">Conference on Empirical…</a> 24 September 2018
                        <Dot>•</Dot>
                        <MetaLine>Computer Science</MetaLine>
                      </Meta>
                      <Tldr>
                        <TldrTag>TLDR</TldrTag>
                        This work defines a new complex and cross-domain semantic parsing and text-to-SQL task so that
                        different complicated SQL queries and databases appear in train and test sets and experiments
                        with various state-of-the-art models show that Spider presents a strong challenge for future
                        research.
                        <Expand>Expand</Expand>
                      </Tldr>
                      <Actions>
                        <ReaderGroup>
                          <Reader>
                            <ReaderIcon>
                              <BooksIcon />
                            </ReaderIcon>
                            [PDF] Semantic Reader
                          </Reader>
                          <ReaderMore aria-label="More readers">
                            <ChevronDown size={16} />
                          </ReaderMore>
                        </ReaderGroup>
                        <LinkButton>
                          <FaBookmark size={11} />
                          Save to Library
                        </LinkButton>
                        <LinkButton>
                          <FaBell size={12} />
                          Create Alert
                        </LinkButton>
                        <LinkButton>
                          <FaQuoteLeft size={12} />
                          Cite
                        </LinkButton>
                      </Actions>
                    </div>
                    <Aside>
                      <ShareRow>
                        <LinkButton $gap={9}>
                          <FaLink size={14} />
                          Share
                        </LinkButton>
                      </ShareRow>
                      <AskCard>
                        <AskHead>
                          <AskTitle>Ask This Paper</AskTitle>
                          <Badge>AI-Powered</Badge>
                        </AskHead>
                        <AskBody onSubmit={stop}>
                          {suggestions.map((text) => (
                            <Suggestion key={text} type="button">
                              {text}
                            </Suggestion>
                          ))}
                          <Question
                            aria-label="Question"
                            placeholder="Ask a question that can be answered by this paper."
                          />
                          <Submit>Submit</Submit>
                          <Publish>
                            <input type="checkbox" />
                            Do not publish my input data
                          </Publish>
                        </AskBody>
                      </AskCard>
                    </Aside>
                  </HeroGrid>
                </Hero>
                <TabsBar aria-label="Paper sections">
                  <TabsRow>
                    {pageTabs.map((text, i) => (
                      <PageTab key={text} href={`#section-${i + 1}`} $active={i === 0}>
                        {text}
                      </PageTab>
                    ))}
                  </TabsRow>
                </TabsBar>
                <Container>
                  <Card>
                    <CardHead>
                      <CardTitle>Figures and Tables from this paper</CardTitle>
                    </CardHead>
                    <Figures>
                      {figures.map(({ label, Drawing }) => (
                        <Figure key={label} href="#figure" aria-label={label}>
                          <Drawing />
                        </Figure>
                      ))}
                    </Figures>
                  </Card>
                </Container>
              </Scroll>
              <Consent>
                <ConsentRow>
                  <p>
                    By clicking accept or continuing to use the site, you agree to the terms outlined in our{" "}
                    <a href="#privacy">Privacy Policy</a>, <a href="#terms">Terms of Service</a>, and{" "}
                    <a href="#license">Dataset License</a>
                  </p>
                  <Accept>ACCEPT &amp; CONTINUE</Accept>
                </ConsentRow>
              </Consent>
            </Page>
            <Scrollbar aria-hidden="true">
              <ArrowMark />
              <Thumb />
              <ArrowMark down />
            </Scrollbar>
          </View>
        </Browser>
      </Work>
      <Pointer width="14" height="24" viewBox="0 0 14 24" fill="none" aria-hidden="true">
        <path d="M2 2h4l1 1 1-1h4M2 22h4l1-1 1 1h4M7 3v18" stroke="#fff" strokeWidth="4" />
        <path d="M3 2h3l1 1 1-1h3M3 22h3l1-1 1 1h3M7 3v18" stroke="#333" strokeWidth="1.500" />
      </Pointer>
    </Desktop>
  );
}
